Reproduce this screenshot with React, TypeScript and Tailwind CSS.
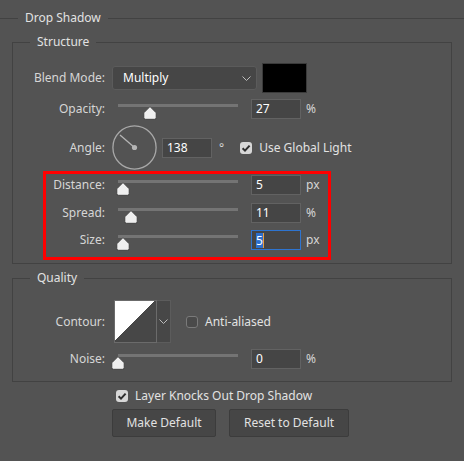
import type { ReactNode } from 'react';

const TRACK = 119;

function Thumb() {
  return (
    <svg width="14" height="14" viewBox="0 0 14 14" className="block">
      <path
        d="M7 0.6 L13.2 6.8 V11.5 Q13.2 13.3 11.4 13.3 H2.6 Q0.8 13.3 0.8 11.5 V6.8 Z"
        fill="#efefef"
        stroke="#3b3b3b"
        strokeWidth="0.9"
      />
    </svg>
  );
}

function Slider({ value, max }: { value: number; max: number }) {
  const pos = Math.round((value / max) * TRACK);
  return (
    <div className="relative ml-[6px] h-[20px] w-[134px] shrink-0">
      <div className="mx-[7px] mt-[5px] h-[3px] bg-[#747474]" />
      <div className="absolute top-[7px]" style={{ left: pos }}>
        <Thumb />
      </div>
    </div>
  );
}

function Field({ value, active }: { value: string; active?: boolean }) {
  return (
    <div
      className={
        active
          ? 'flex h-[20px] w-[50px] shrink-0 items-center border border-[#2e74cf] bg-[#454545] pl-[4px] text-white'
          : 'flex h-[20px] w-[50px] shrink-0 items-center border border-[#626262] bg-[#454545] pl-[4px] text-white'
      }
    >
      {active ? (
        <>
          <span className="bg-[#2d6fcc] leading-[15px]">{value}</span>
          <span className="h-[15px] w-px bg-[#e8a040]" />
        </>
      ) : (
        value
      )}
    </div>
  );
}

function Label({ children }: { children: ReactNode }) {
  return <span className="w-[92px] shrink-0 text-right text-[#d6d6d6]">{children}</span>;
}

function Checkbox({ checked }: { checked?: boolean }) {
  return checked ? (
    <div className="flex h-[12px] w-[12px] shrink-0 items-center justify-center rounded-[3px] bg-[#d7d7d7]">
      <svg width="10" height="10" viewBox="0 0 10 10">
        <path d="M1.6 5.2 L4 7.6 L8.6 2.6" fill="none" stroke="#2e2e2e" strokeWidth="2" />
      </svg>
    </div>
  ) : (
    <div className="h-[12px] w-[12px] shrink-0 rounded-[3px] border border-[#7a7a7a] bg-[#4a4a4a]" />
  );
}

function Chevron() {
  return (
    <svg width="9" height="5" viewBox="0 0 9 5">
      <path d="M0.5 0.5 L4.5 4.5 L8.5 0.5" fill="none" stroke="#bdbdbd" strokeWidth="1" />
    </svg>
  );
}

function SliderRow({ label, value, max, unit, active, className }: {
  label: string; value: number; max: number; unit: string; active?: boolean; className?: string;
}) {
  return (
    <div className={'flex h-[20px] items-center ' + (className ?? '')}>
      <Label>{label}</Label>
      <Slider value={value} max={max} />
      <div className="ml-[6px]"><Field value={String(value)} active={active} /></div>
      <span className="ml-[5px] text-[#d6d6d6]">{unit}</span>
    </div>
  );
}

export default function App() {
  return (
    <div
      className="h-[461px] w-[464px] overflow-hidden bg-[#535353] text-[12px] leading-[16px] text-[#e2e2e2]"
      style={{ fontFamily: '"Noto Sans", sans-serif' }}
    >
      <div className="mt-[10px] flex h-[16px] items-center">
        <div className="h-px w-[18px] bg-[#424242]" />
        <span className="px-[7px]">Drop Shadow</span>
        <div className="h-px flex-1 bg-[#424242]" />
      </div>

      <fieldset className="mx-[12px] mt-[8px] border border-[#424242] pb-[13px]">
        <legend className="ml-[17px] px-[7px] leading-[16px]">Structure</legend>
        <div className="pt-[13px]">
          <div className="flex h-[30px] items-center">
            <Label>Blend Mode:</Label>
            <div className="ml-[7px] flex h-[24px] w-[145px] items-center justify-between rounded-[3px] border border-[#5b5b5b] bg-[#464646] pl-[10px] pr-[5px] text-white">
              <span>Multiply</span>
              <Chevron />
            </div>
            <div className="ml-[5px] h-[30px] w-[45px] border border-[#3a3a3a] bg-black" />
          </div>

          <SliderRow label="Opacity:" value={27} max={100} unit="%" className="mt-[6px]" />

          <div className="mt-[6px] flex h-[45px] items-center">
            <Label>Angle:</Label>
            <svg width="45" height="45" viewBox="0 0 45 45" className="ml-[7px] shrink-0">
              <circle cx="22.5" cy="22.5" r="21.6" fill="none" stroke="#a9a9a9" strokeWidth="1.3" />
              <line x1="22.5" y1="22.5" x2="8" y2="10" stroke="#b5b5b5" strokeWidth="1.3" />
              <circle cx="22.5" cy="22.5" r="2.6" fill="#b5b5b5" />
            </svg>
            <div className="ml-[5px]"><Field value="138" /></div>
            <span className="ml-[7px] text-[#d6d6d6]">°</span>
            <div className="ml-[16px]"><Checkbox checked /></div>
            <span className="ml-[7px]">Use Global Light</span>
          </div>

          <div className="relative mt-[5px]">
            <SliderRow label="Distance:" value={5} max={119} unit="px" />
            <SliderRow label="Spread:" value={11} max={100} unit="%" className="mt-[8px]" />
            <SliderRow label="Size:" value={5} max={119} unit="px" active className="mt-[7px]" />
            <div className="pointer-events-none absolute bottom-[-10px] left-[30px] top-[-4px] w-[288px] border-[3px] border-[#ff0000]" />
          </div>
        </div>
      </fieldset>

      <fieldset className="mx-[12px] mt-[6px] border border-[#424242] pb-[12px]">
        <legend className="ml-[17px] px-[7px] leading-[16px]">Quality</legend>
        <div className="pt-[14px]">
          <div className="flex h-[43px] items-center">
            <Label>Contour:</Label>
            <div className="ml-[9px] flex h-[43px] shrink-0">
              <svg width="43" height="43" viewBox="0 0 43 43" className="block border border-[#6b6b6b]" shapeRendering="crispEdges">
                <rect width="43" height="43" fill="#474747" />
                <polygon points="0,0 41,0 0,41" fill="#ffffff" />
              </svg>
              <div className="flex w-[14px] items-center justify-center border border-l-0 border-[#5c5c5c] bg-[#474747]">
                <Chevron />
              </div>
            </div>
            <div className="ml-[15px]"><Checkbox /></div>
            <span className="ml-[7px]">Anti-aliased</span>
          </div>
          <SliderRow label="Noise:" value={0} max={100} unit="%" className="mt-[6px]" />
        </div>
      </fieldset>

      <div className="mt-[6px] flex h-[16px] items-center pl-[116px]">
        <Checkbox checked />
        <span className="ml-[7px]">Layer Knocks Out Drop Shadow</span>
      </div>

      <div className="mt-[5px] flex gap-[13px] pl-[112px]">
        <div className="flex h-[28px] w-[104px] items-center justify-center rounded-[2px] border border-[#3c3c3c] bg-[#464646]">
          Make Default
        </div>
        <div className="flex h-[28px] w-[120px] items-center justify-center rounded-[2px] border border-[#3c3c3c] bg-[#464646]">
          Reset to Default
        </div>
      </div>
    </div>
  );
}
